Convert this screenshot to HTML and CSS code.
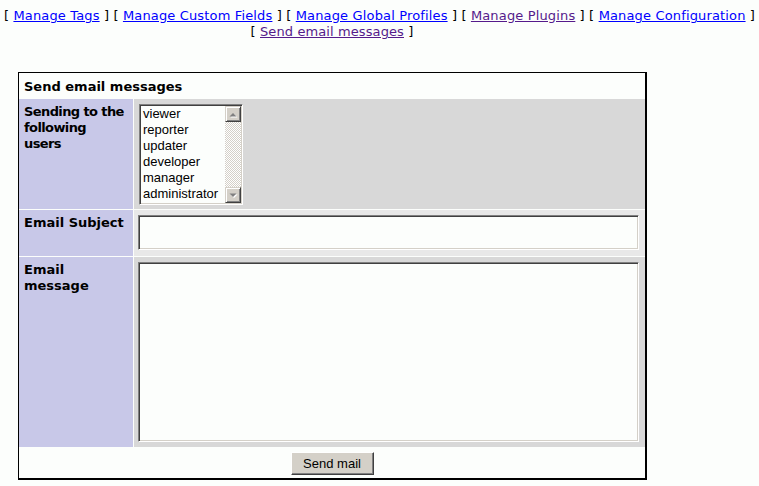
FILE: index.html
```html
<!DOCTYPE html>
<html>
<head>
<meta charset="utf-8">
<link rel="stylesheet" href="styles.css">
</head>
<body>
<div class="nav">
  <div class="navline1">[ <a href="#">Manage Tags</a> ] [ <a href="#">Manage Custom Fields</a> ] [ <a href="#">Manage Global Profiles</a> ] [ <a href="#" class="visited">Manage Plugins</a> ] [ <a href="#">Manage Configuration</a> ]</div>
  <div class="navline2">[ <a href="#" class="visited">Send email messages</a> ]</div>
</div>
<form class="form">
  <div class="title">Send email messages</div>
  <div class="label tight">Sending to the<br>following<br>users</div>
  <div class="value row1">
    <div class="listbox">
      <div class="items">
        <div>viewer</div>
        <div>reporter</div>
        <div>updater</div>
        <div>developer</div>
        <div>manager</div>
        <div>administrator</div>
      </div>
      <div class="scrollbar">
        <div class="sbtn"><svg width="12" height="12" viewBox="0 0 12 12"><path d="M2.5 8.5 L6 5 L9.5 8.5 Z" fill="#ffffff" transform="translate(1,1)"/><path d="M2.5 8.5 L6 5 L9.5 8.5 Z" fill="#808080"/></svg></div>
        <div class="track"></div>
        <div class="sbtn"><svg width="12" height="12" viewBox="0 0 12 12"><path d="M2.5 4.5 L9.5 4.5 L6 8 Z" fill="#ffffff" transform="translate(1,1)"/><path d="M2.5 4.5 L9.5 4.5 L6 8 Z" fill="#808080"/></svg></div>
      </div>
    </div>
  </div>
  <div class="label">Email Subject</div>
  <div class="value row2"><input type="text" class="subject"></div>
  <div class="label">Email<br>message</div>
  <div class="value row1"><textarea class="message"></textarea></div>
  <div class="buttons"><button type="button" class="btn">Send mail</button></div>
</form>
</body>
</html>
```
FILE: styles.css
```css
html, body {
  background: #fcfefc;
}
body {
  margin: 8px 0 0 0;
  font-family: "DejaVu Sans", Verdana, sans-serif;
  font-size: 13px;
  color: #000;
}
.nav {
  line-height: 16px;
  white-space: nowrap;
}
.navline1 {
  text-align: center;
  letter-spacing: 0.15px;
}
.navline2 {
  margin-left: 18px;
  width: 628px;
  text-align: center;
  letter-spacing: 0.1px;
}
.nav a {
  color: #0000ff;
  text-decoration: underline;
}
.nav a.visited {
  color: #551a8b;
}
.form {
  margin: 32px 0 0 18px;
  width: 626px;
  border-style: solid;
  border-color: #000;
  border-width: 1px 2px 2px 1px;
  background: #fcfefc;
  display: grid;
  grid-template-columns: 114px 1fr;
  grid-template-rows: 25px 110px 46px 190px 30px;
  column-gap: 1px;
  row-gap: 1px;
}
.title {
  grid-column: 1 / 3;
  background: #fcfefc;
  font-weight: bold;
  display: flex;
  align-items: center;
  padding-left: 5px;
  padding-top: 1px;
}
.label {
  background: #c8c8e8;
  font-weight: bold;
  line-height: 16px;
  padding: 5px 0 0 5px;
  white-space: nowrap;
}
.label.tight {
  letter-spacing: -0.6px;
}
.value {
  padding: 5px 4px;
  box-sizing: border-box;
}
.row1 { background: #d8d8d8; }
.row2 { background: #e8e8e8; }
.listbox {
  margin-left: 1px;
  width: 104px;
  height: 101px;
  box-sizing: border-box;
  border: 1px solid;
  border-color: #808080 #ffffff #ffffff #808080;
  box-shadow: inset 1px 1px #404040, inset -1px -1px #d4d0c8;
  background: #fcfefc;
  display: flex;
  padding: 1px;
}
.items {
  flex: 1;
  font-family: "Liberation Sans", Arial, sans-serif;
  font-size: 13px;
  line-height: 16px;
  padding-left: 2px;
  overflow: hidden;
  white-space: nowrap;
}
.scrollbar {
  width: 16px;
  display: flex;
  flex-direction: column;
}
.sbtn {
  width: 16px;
  height: 16px;
  box-sizing: border-box;
  background: #d4d0c8;
  border: 1px solid;
  border-color: #d4d0c8 #404040 #404040 #d4d0c8;
  box-shadow: inset 1px 1px #ffffff, inset -1px -1px #808080;
  display: flex;
  align-items: center;
  justify-content: center;
}
.track {
  flex: 1;
  background-color: #ffffff;
  background-image: conic-gradient(#d4d0c8 25%, #ffffff 0 50%, #d4d0c8 0 75%, #ffffff 0);
  background-size: 2px 2px;
}
.subject, .message {
  display: block;
  margin: 0;
  width: 501px;
  box-sizing: border-box;
  border: 1px solid;
  border-color: #808080 #ffffff #ffffff #808080;
  box-shadow: inset 1px 1px #404040, inset -1px -1px #d4d0c8;
  background: #fcfefc;
  font-family: "DejaVu Sans", Verdana, sans-serif;
  font-size: 13px;
  padding: 2px 3px;
  outline: none;
  resize: none;
}
.subject { height: 35px; }
.message { height: 180px; }
.buttons {
  grid-column: 1 / 3;
  background: #fcfefc;
  display: flex;
  justify-content: center;
  padding-top: 4px;
}
.btn {
  width: 83px;
  height: 23px;
  box-sizing: border-box;
  margin: 0;
  padding: 0;
  background: #d4d0c8;
  border: 1px solid;
  border-color: #ffffff #404040 #404040 #ffffff;
  box-shadow: inset -1px -1px #808080;
  font-family: "Liberation Sans", Arial, sans-serif;
  font-size: 13px;
  color: #000;
}
```
